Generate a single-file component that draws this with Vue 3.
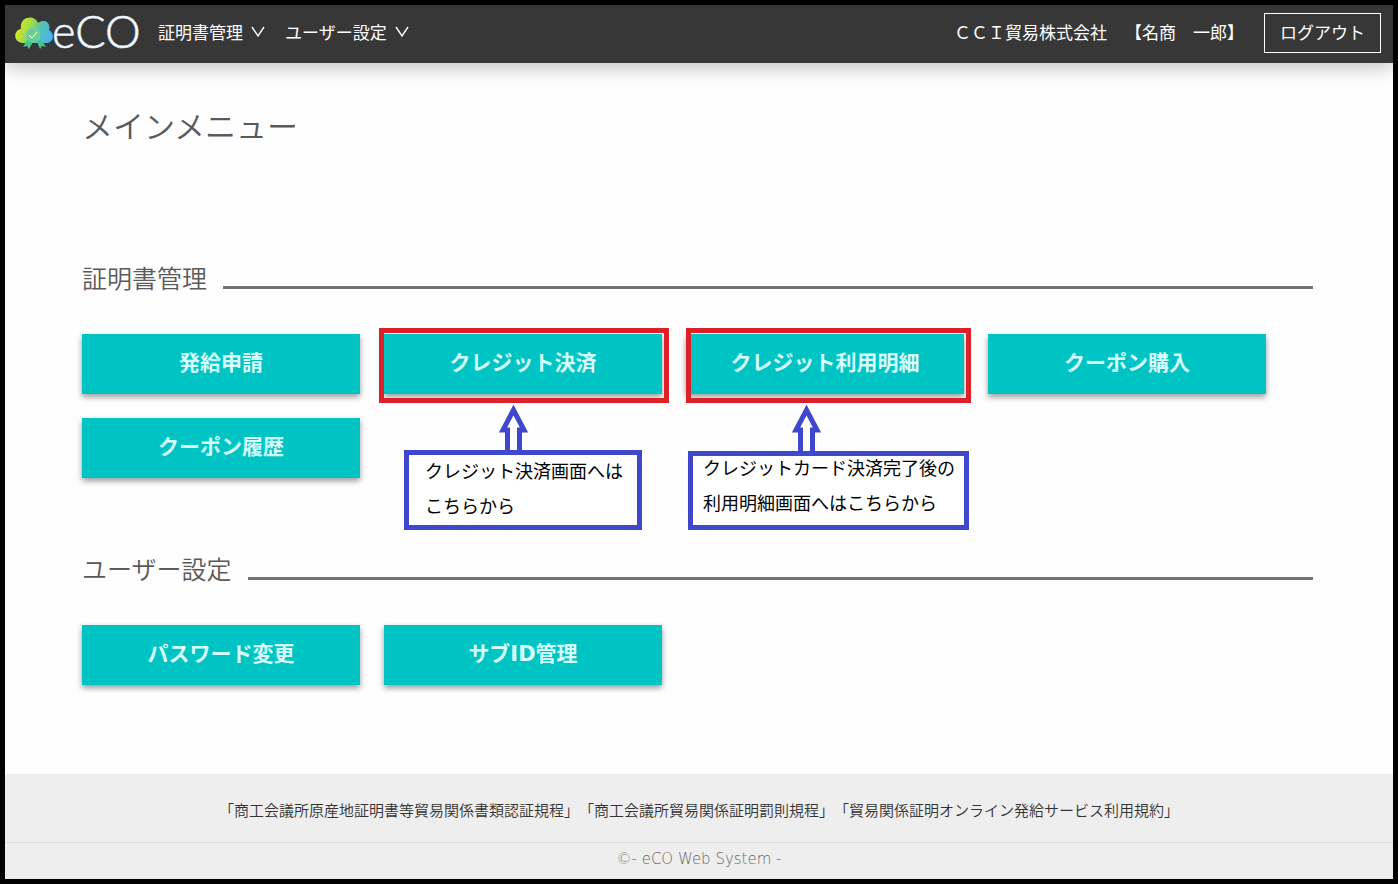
<script setup>
const menus = ['証明書管理', 'ユーザー設定']

const sections = [
  {
    title: '証明書管理',
    items: [
      { label: '発給申請' },
      {
        label: 'クレジット決済',
        mark: 'payment',
        note: ['クレジット決済画面へは', 'こちらから'],
      },
      {
        label: 'クレジット利用明細',
        mark: 'statement',
        note: ['クレジットカード決済完了後の', '利用明細画面へはこちらから'],
      },
      { label: 'クーポン購入' },
      { label: 'クーポン履歴' },
    ],
  },
  {
    title: 'ユーザー設定',
    items: [{ label: 'パスワード変更' }, { label: 'サブID管理' }],
  },
]

const terms = [
  '「商工会議所原産地証明書等貿易関係書類認証規程」',
  '「商工会議所貿易関係証明罰則規程」',
  '「貿易関係証明オンライン発給サービス利用規約」',
]
</script>

<template>
  <div class="page">
    <header class="topbar">
      <a class="logo" href="#" aria-label="eCO">
        <svg width="128" height="56" viewBox="0 -7 128 56">
          <defs>
            <linearGradient id="cloud" x1="0" y1="0.3" x2="1" y2="0.6">
              <stop offset="0" stop-color="#e2ee1c" />
              <stop offset="0.4" stop-color="#9bd84a" />
              <stop offset="0.65" stop-color="#4fc4b4" />
              <stop offset="1" stop-color="#4db4f0" />
            </linearGradient>
          </defs>
          <path
            d="M8 31 C-2 31 -2 18 6 17 C4 4 20 2 23 11 C30 6 36 11 34 18 C40 21 39 31 31 31 Z"
            fill="url(#cloud)"
          />
          <path d="M12 28 L8 35 L12 34 L14 37 L18 30 Z M22 30 L25 37 L27 34 L31 35 L26 27 Z" fill="#45c58a" />
          <circle cx="18" cy="23" r="7" fill="#6bcf8b" stroke="#7bc8d8" stroke-width="1" />
          <path d="M14 23 L17 26 L22 20" fill="none" stroke="#f2fff4" stroke-width="1" />
          <text class="wordmark" x="37" y="36">eCO</text>
        </svg>
      </a>
      <nav class="nav">
        <button v-for="menu in menus" :key="menu" type="button" class="nav-item">
          <span>{{ menu }}</span>
          <svg width="14" height="12" viewBox="0 0 14 12" aria-hidden="true">
            <path d="M1 1 L7 10 L13 1" fill="none" stroke="currentColor" stroke-width="1.4" />
          </svg>
        </button>
      </nav>
      <div class="account">
        <span>ＣＣＩ貿易株式会社</span>
        <span>【名商　一郎】</span>
      </div>
      <button type="button" class="logout">ログアウト</button>
    </header>

    <main class="main">
      <h1>メインメニュー</h1>
      <section v-for="section in sections" :key="section.title">
        <h2><span>{{ section.title }}</span></h2>
        <div class="tiles">
          <div v-for="item in section.items" :key="item.label" class="cell" :class="item.mark">
            <button type="button" class="tile">{{ item.label }}</button>
            <template v-if="item.note">
              <span class="frame"></span>
              <svg class="arrow" width="30" height="48" viewBox="0 0 30 48" aria-hidden="true">
                <path
                  d="M8.5 48 V25 H4 L14.5 5 L25 25 H20.5 V48"
                  fill="#fff"
                  stroke="#3f48cc"
                  stroke-width="5"
                />
              </svg>
              <p class="note">
                <span v-for="line in item.note" :key="line">{{ line }}</span>
              </p>
            </template>
          </div>
        </div>
      </section>
    </main>

    <footer class="footer">
      <div class="terms">
        <a v-for="term in terms" :key="term" href="#">{{ term }}</a>
      </div>
      <p class="copyright">©- eCO Web System -</p>
    </footer>
  </div>
</template>

<style>
body {
  margin: 0;
}
</style>

<style scoped>
.page {
  box-sizing: border-box;
  min-height: 100vh;
  display: flex;
  flex-direction: column;
  border: 5px solid #000;
  background: #fefefe;
  color: #5a5a5a;
  font-family: "Noto Sans CJK JP", "Noto Sans", sans-serif;
  text-spacing-trim: space-all;
}

button {
  font-family: inherit;
  cursor: pointer;
}

.topbar {
  position: relative;
  display: flex;
  align-items: center;
  box-sizing: border-box;
  height: 58px;
  padding: 0 12px 2px 10px;
  background: #373737;
  box-shadow: 0 4px 20px rgba(0, 0, 0, 0.25);
  clip-path: inset(0 0 -40px 0);
  color: #fff;
  font-size: 17px;
  line-height: 24px;
}

.logo {
  display: flex;
  margin-right: 15px;
}

.wordmark {
  font-family: Lato, "DejaVu Sans", sans-serif;
  font-weight: 300;
  font-size: 45px;
  fill: #fff;
  stroke: #dcecff;
  stroke-width: 0.7;
}

.nav {
  display: flex;
  flex: 1;
  gap: 20px;
}

.nav-item {
  display: flex;
  align-items: center;
  gap: 8px;
  padding: 0 0 2px;
  border: 0;
  background: none;
  color: inherit;
  font-size: 17px;
  line-height: 24px;
}

.account {
  display: flex;
  gap: 18px;
  margin-right: 20px;
  padding-bottom: 2px;
}

.logout {
  box-sizing: border-box;
  height: 40px;
  padding: 0 15px 2px;
  border: 1px solid #fff;
  background: none;
  color: inherit;
  font-size: 17px;
  line-height: 24px;
}

.main {
  flex: 1;
  padding: 42px 80px 74px 77px;
}

h1 {
  margin: 0 0 114px;
  font-size: 31px;
  font-weight: 350;
  line-height: 40px;
}

h2 {
  display: flex;
  align-items: flex-end;
  gap: 16px;
  margin: 0 0 37px;
  font-size: 25px;
  font-weight: 350;
  line-height: 36px;
}

h2 span {
  padding-bottom: 2px;
}

h2::after {
  content: "";
  flex: 1;
  height: 3px;
  margin-bottom: 8px;
  background: #737373;
}

section + section {
  margin-top: 72px;
}

.tiles {
  display: flex;
  flex-wrap: wrap;
  gap: 24px;
}

.cell {
  position: relative;
  width: 278px;
}

.tile {
  display: block;
  width: 100%;
  height: 60px;
  padding: 0 0 6px;
  border: 0;
  background: #00c4c4;
  box-shadow: 0 3px 6px rgba(0, 0, 0, 0.4);
  color: #d8ffff;
  font-family: "DejaVu Sans", "Noto Sans CJK JP", sans-serif;
  font-size: 21px;
  font-weight: 700;
}

.frame,
.arrow,
.note {
  position: absolute;
  box-sizing: border-box;
  z-index: 1;
}

.frame {
  top: -6px;
  height: 75px;
  border: 5px solid #dc2128;
  pointer-events: none;
}

.arrow {
  top: 71px;
}

.note {
  display: grid;
  gap: 13px;
  margin: 0;
  border: 5px solid #3f48cc;
  background: #fff;
  color: #000;
  font-size: 18px;
  line-height: 22px;
  white-space: nowrap;
}

.payment .frame {
  left: -5px;
  width: 290px;
}

.payment .arrow {
  left: 115px;
}

.payment .note {
  top: 116px;
  left: 20px;
  width: 238px;
  padding: 4px 0 9px 16px;
}

.statement .frame {
  left: 0;
  width: 285px;
}

.statement .arrow {
  left: 106px;
}

.statement .note {
  top: 117px;
  left: 2px;
  width: 281px;
  padding: 0 0 12px 10px;
}

.footer {
  background: #eee;
}

.terms {
  display: flex;
  flex-wrap: wrap;
  justify-content: center;
  padding: 24px 0 20px;
  border-bottom: 1px solid #dedede;
  font-size: 15px;
  font-weight: 350;
  line-height: 24px;
}

.terms a {
  color: #333;
  text-decoration: none;
}

.copyright {
  margin: 0;
  padding: 4px 0 8px;
  color: #666;
  font-family: "DejaVu Sans", sans-serif;
  font-weight: 200;
  font-size: 15px;
  line-height: 24px;
  text-align: center;
}
</style>
